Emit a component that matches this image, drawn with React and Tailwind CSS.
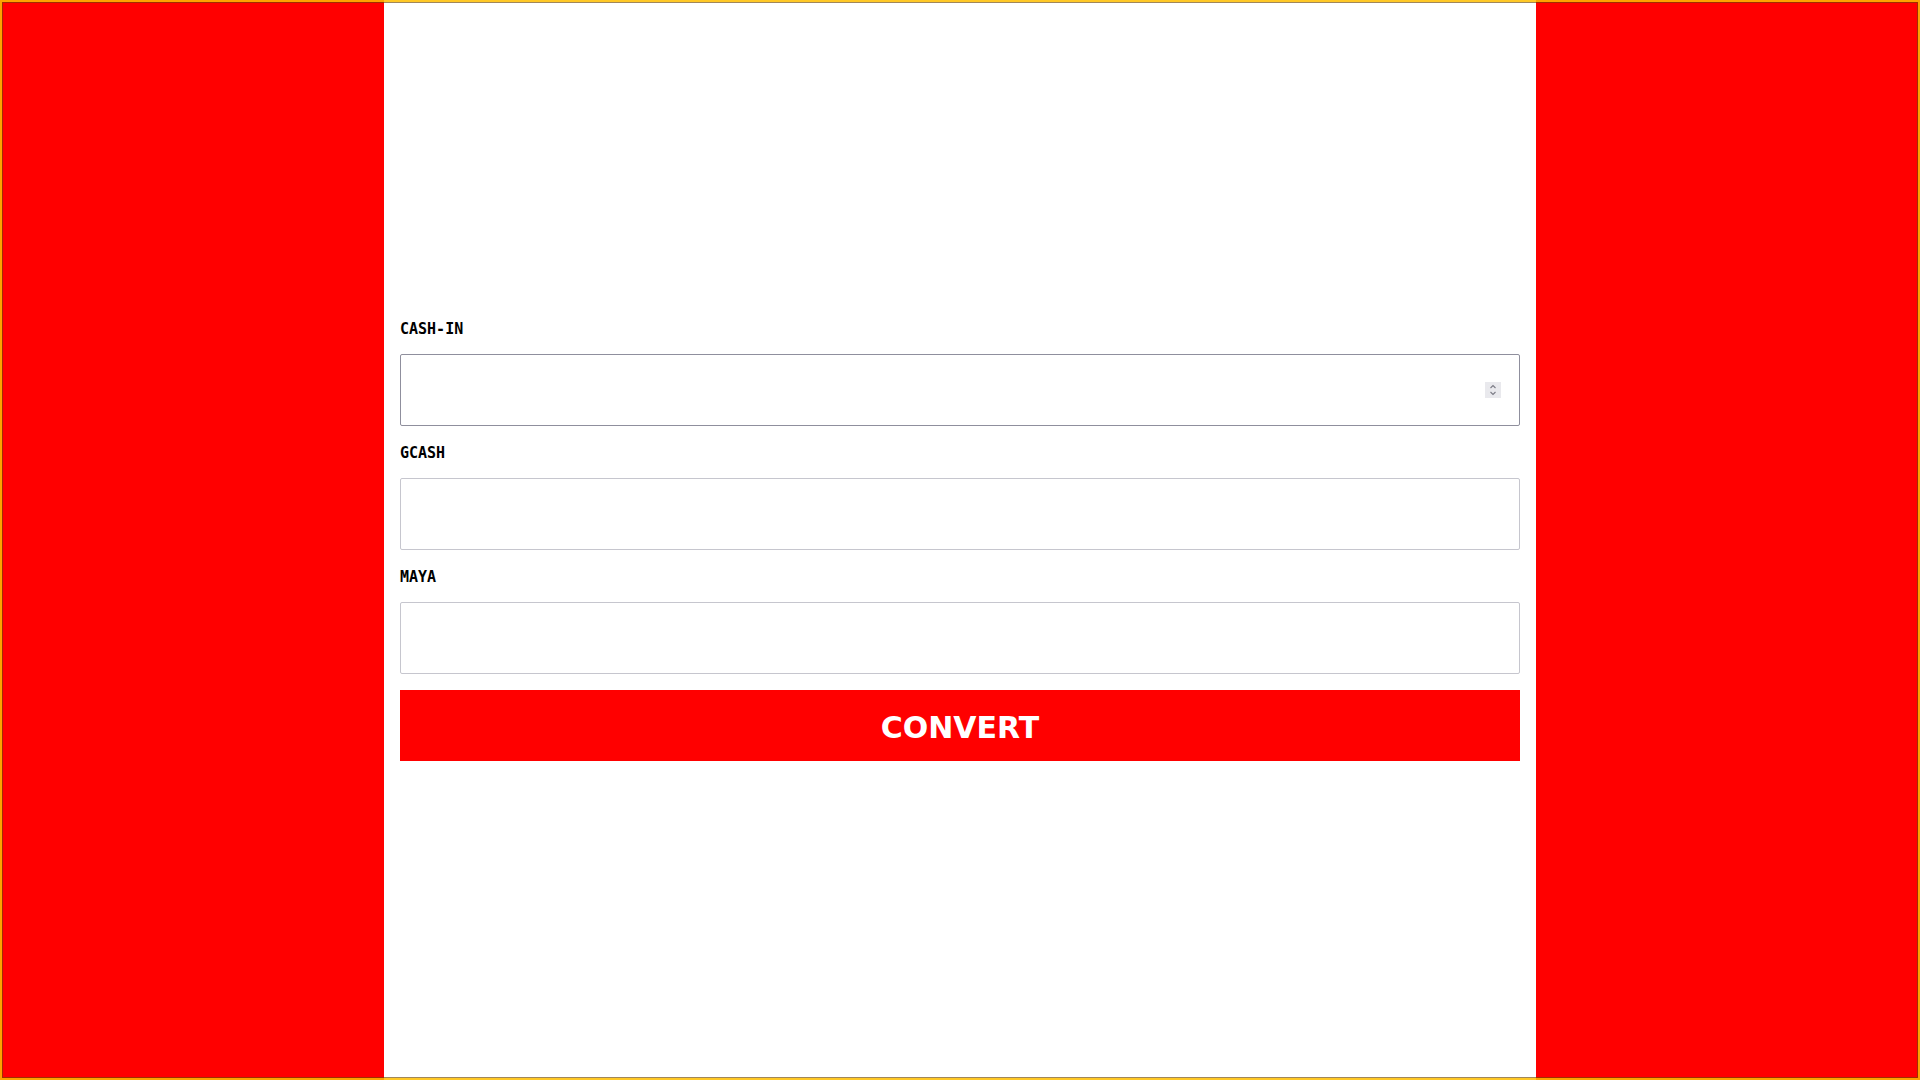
import React from "react";

const labelCls =
  "block h-[20px] leading-[20px] text-[15px] font-bold text-black font-['DejaVu_Sans_Mono',monospace]";

function Spinner() {
  return (
    <div className="pointer-events-none absolute right-[19px] top-1/2 flex h-[16px] w-[16px] -translate-y-1/2 flex-col items-center justify-center bg-[#e9e9ed]">
      <svg width="10" height="14" viewBox="0 0 10 14" fill="none" stroke="#7b7b85" strokeWidth="1.1">
        <path d="M2.5 5 L5 2.5 L7.5 5" />
        <path d="M2.5 9 L5 11.5 L7.5 9" />
      </svg>
    </div>
  );
}

function Field({ label, id, hovered, number, className = "" }) {
  return (
    <div className={className}>
      <label htmlFor={id} className={labelCls}>
        {label}
      </label>
      <div className="relative mt-[15px]">
        <input
          id={id}
          type={number ? "number" : "text"}
          className={
            "block w-full h-[72px] rounded-[2px] border bg-white pl-3 pr-[40px] text-[15px] outline-none font-['DejaVu_Sans',sans-serif] [appearance:textfield] [&::-webkit-inner-spin-button]:appearance-none [&::-webkit-outer-spin-button]:appearance-none " +
            (hovered ? "border-[#8f8f9d]" : "border-[#c6c6ce]")
          }
        />
        {number && <Spinner />}
      </div>
    </div>
  );
}

export default function App() {
  return (
    <div className="relative flex h-[1080px] w-[1920px] overflow-hidden">
      <div className="w-[384px] shrink-0 bg-[#ff0000]" />
      <div className="flex w-[1152px] shrink-0 flex-col justify-center bg-white px-4">
        <Field label="CASH-IN" id="cashin" hovered number />
        <Field label="GCASH" id="gcash" className="mt-[17px]" />
        <Field label="MAYA" id="maya" className="mt-[17px]" />
        <button
          type="button"
          className="mt-[16px] flex h-[71px] w-full items-center justify-center bg-[#ff0000] pt-[3px] text-[30px] font-bold text-white font-['DejaVu_Sans',sans-serif]"
        >
          CONVERT
        </button>
      </div>
      <div className="w-[384px] shrink-0 bg-[#ff0000]" />
      <div className="pointer-events-none absolute inset-0 border-2 border-[rgba(255,190,0,0.85)] shadow-[inset_0_0_0_1px_rgba(110,70,0,0.65)]" />
    </div>
  );
}
